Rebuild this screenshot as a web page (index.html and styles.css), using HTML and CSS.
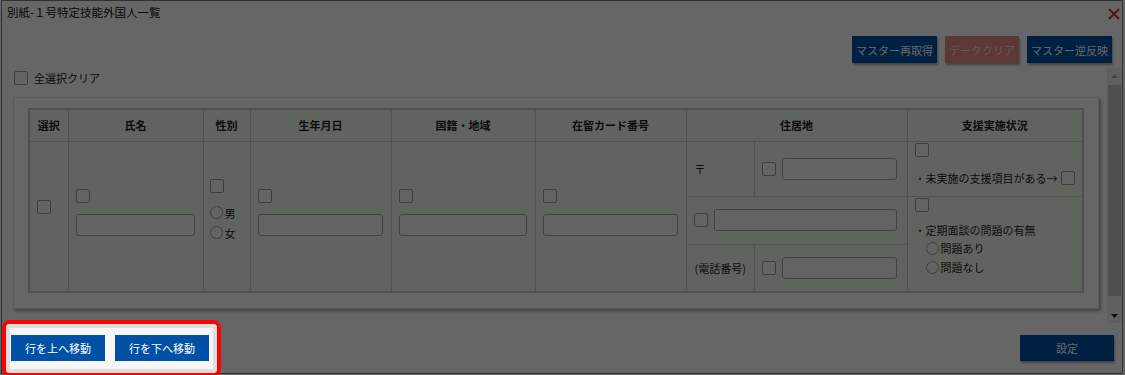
FILE: index.html
```html
<!DOCTYPE html>
<html lang="ja">
    <head>
        <meta charset="UTF-8">
        <meta name="viewport" content="width=device-width, initial-scale=1.0"/>
        <title>別紙-１号特定技能外国人一覧</title>
        <link rel="stylesheet" href="styles.css">
    </head>
    <body>
        <div class="dialog">
            <div class="dialog-title">
                <span class="title-text">別紙-１号特定技能外国人一覧</span>
                <button class="close" title="閉じる">
                    <svg width="14" height="14" viewBox="0 0 14 14"><path d="M2 2L12 12M12 2L2 12" stroke="#c83a3a" stroke-width="2" fill="none"/></svg>
                </button>
            </div>

            <div class="toolbar">
                <button class="btn btn-blue">マスター再取得</button>
                <button class="btn btn-red">データクリア</button>
                <button class="btn btn-blue">マスター逆反映</button>
            </div>

            <div class="scroll-area">
                <div class="scroll-content">
                    <label class="all-clear"><input type="checkbox" class="chk">全選択クリア</label>

                    <div class="panel">
                        <table class="grid">
                            <colgroup>
                                <col class="c-sel">
                                <col class="c-name">
                                <col class="c-sex">
                                <col class="c-birth">
                                <col class="c-nation">
                                <col class="c-card">
                                <col class="c-addr-label">
                                <col class="c-addr-input">
                                <col class="c-support">
                            </colgroup>
                            <thead>
                                <tr>
                                    <th>選択</th>
                                    <th>氏名</th>
                                    <th>性別</th>
                                    <th>生年月日</th>
                                    <th>国籍・地域</th>
                                    <th>在留カード番号</th>
                                    <th colspan="2">住居地</th>
                                    <th>支援実施状況</th>
                                </tr>
                            </thead>
                            <tbody>
                                <tr class="row-top">
                                    <td rowspan="3" class="cell-sel"><input type="checkbox" class="chk"></td>
                                    <td rowspan="3" class="cell-field"><input type="checkbox" class="chk"><input type="text" class="txt"></td>
                                    <td rowspan="3" class="cell-sex">
                                        <input type="checkbox" class="chk">
                                        <label class="radio"><input type="radio" name="sex" class="dot">男</label>
                                        <label class="radio"><input type="radio" name="sex" class="dot">女</label>
                                    </td>
                                    <td rowspan="3" class="cell-field"><input type="checkbox" class="chk"><input type="text" class="txt"></td>
                                    <td rowspan="3" class="cell-field"><input type="checkbox" class="chk"><input type="text" class="txt"></td>
                                    <td rowspan="3" class="cell-field"><input type="checkbox" class="chk"><input type="text" class="txt"></td>
                                    <td class="cell-label">〒</td>
                                    <td class="cell-input"><input type="checkbox" class="chk"><input type="text" class="txt"></td>
                                    <td class="cell-support">
                                        <input type="checkbox" class="chk">
                                        <div class="support-line first">・未実施の支援項目がある→<input type="checkbox" class="chk"></div>
                                    </td>
                                </tr>
                                <tr class="row-mid">
                                    <td colspan="2" class="cell-input wide"><input type="checkbox" class="chk"><input type="text" class="txt"></td>
                                    <td rowspan="2" class="cell-support">
                                        <input type="checkbox" class="chk">
                                        <div class="support-line">・定期面談の問題の有無</div>
                                        <label class="radio indent"><input type="radio" name="issue" class="dot">問題あり</label>
                                        <label class="radio indent"><input type="radio" name="issue" class="dot">問題なし</label>
                                    </td>
                                </tr>
                                <tr class="row-bottom">
                                    <td class="cell-label">(電話番号)</td>
                                    <td class="cell-input"><input type="checkbox" class="chk"><input type="text" class="txt"></td>
                                </tr>
                            </tbody>
                        </table>
                    </div>
                </div>

                <div class="scrollbar">
                    <span class="sb-arrow">
                        <svg width="7" height="4" viewBox="0 0 7 4"><polygon points="0,4 3.5,0 7,4" fill="#a8a8a8"/></svg>
                    </span>
                    <span class="sb-thumb"></span>
                    <span class="sb-arrow down">
                        <svg width="7" height="4" viewBox="0 0 7 4"><polygon points="0,0 7,0 3.5,4" fill="#2a2a2a"/></svg>
                    </span>
                </div>
            </div>

            <div class="dialog-footer">
                <div class="highlight">
                    <div class="move-group">
                        <button class="btn btn-move">行を上へ移動</button>
                        <button class="btn btn-move">行を下へ移動</button>
                    </div>
                </div>
                <button class="btn btn-blue btn-submit">設定</button>
            </div>
        </div>

        <div class="overlay"></div>
    </body>
</html>
```

FILE: styles.css
```css
*
{
    box-sizing: border-box;
}

html, body
{
    margin: 0;
}

body
{
    width: 1125px;
    height: 375px;
    overflow: hidden;
    background: #ffffff;
    color: #1e1e1e;
    font-family: "Noto Sans CJK JP", "Noto Sans", sans-serif;
    font-size: 11px;
}

button
{
    font-family: inherit;
}

/* ダイアログ本体 */
.dialog
{
    display: flex;
    flex-direction: column;
    width: 1122px;
    height: 374px;
    margin-left: 1px;
    border: 1px solid #7c7c7c;
    background: #ffffff;
}

.dialog-title
{
    display: flex;
    align-items: center;
    justify-content: space-between;
    height: 21px;
    padding: 0 1px 0 5px;
}

.title-text
{
    font-size: 11.5px;
    color: #111;
}

.close
{
    display: flex;
    padding: 0;
    border: 0;
    background: none;
    margin-top: 4px;
}

.toolbar
{
    display: flex;
    justify-content: flex-end;
    gap: 8px;
    margin-top: 14px;
    padding-right: 10px;
}

.btn
{
    height: 27px;
    padding: 0 4px;
    border: 0;
    color: #ffffff;
    font-size: 11px;
    box-shadow: 1px 2px 2px rgba(0, 0, 0, 0.35);
}

.btn-blue
{
    background: #0050a5;
}

.btn-red
{
    background: #e5908b;
    color: #f2dcda;
}

/* スクロール領域 */
.scroll-area
{
    display: flex;
    height: 255px;
    margin-top: 5px;
}

.scroll-content
{
    flex: 1;
    overflow: hidden;
    padding: 2px 8px 0 11px;
}

.scrollbar
{
    display: flex;
    flex-direction: column;
    width: 15px;
    background: #f0f0f0;
}

.sb-arrow
{
    display: flex;
    align-items: center;
    justify-content: center;
    height: 15px;
}

.sb-arrow.down
{
    margin-top: auto;
}

.sb-thumb
{
    height: 211px;
    margin: 2px 1px 0 1px;
    background: #c6c6c6;
}

.all-clear
{
    display: flex;
    align-items: center;
    gap: 6px;
    height: 15px;
    padding-left: 1px;
    color: #222;
}

.panel
{
    margin-top: 12px;
    padding: 10px 14px 15px 14px;
    border: 1px solid #e2e2e2;
    background: #ffffff;
    box-shadow: 2px 2px 3px rgba(0, 0, 0, 0.35);
}

.grid
{
    width: 1056px;
    border-collapse: collapse;
    table-layout: fixed;
    border: 2px solid #c9c9c9;
    background: #eefcec;
}

.grid th,
.grid td
{
    border: 1px solid #c8d2c6;
    padding: 0;
}

.grid th
{
    height: 32px;
    font-weight: bold;
    text-align: center;
}

.c-sel { width: 39px; }
.c-name { width: 135px; }
.c-sex { width: 47px; }
.c-birth { width: 141px; }
.c-nation { width: 144px; }
.c-card { width: 151px; }
.c-addr-label { width: 68px; }
.c-addr-input { width: 153px; }
.c-support { width: 176px; }

.row-top { height: 55px; }
.row-mid { height: 48px; }
.row-bottom { height: 48px; }

/* 入力部品 */
.chk
{
    -webkit-appearance: none;
    appearance: none;
    display: inline-block;
    width: 14px;
    height: 14px;
    margin: 0;
    border: 1px solid #9c9c9c;
    border-radius: 2px;
    background: #fafafa;
    vertical-align: middle;
}

.txt
{
    -webkit-appearance: none;
    appearance: none;
    height: 22px;
    margin: 0;
    padding: 2px 4px;
    border: 1px solid #a9a9a9;
    border-radius: 3px;
    background: #fbfbfb;
    font: inherit;
}

.dot
{
    -webkit-appearance: none;
    appearance: none;
    width: 13px;
    height: 13px;
    margin: 0 2px 0 0;
    border: 1px solid #9c9c9c;
    border-radius: 50%;
    background: #fafafa;
}

.radio
{
    display: flex;
    align-items: center;
    height: 20px;
}

.cell-sel
{
    vertical-align: middle;
    padding: 0 0 22px 7px !important;
}

.cell-field
{
    vertical-align: middle;
    padding: 0 8px 8px 7px !important;
}

.cell-field .chk
{
    display: block;
    margin-bottom: 11px;
}

.cell-field .txt
{
    display: block;
    width: 100%;
}

.cell-sex
{
    vertical-align: middle;
    padding: 0 0 11px 6px !important;
}

.cell-sex .chk
{
    display: block;
    margin-bottom: 10px;
}

.cell-label
{
    padding-left: 8px !important;
    vertical-align: middle;
}

.cell-input
{
    padding: 0 7px !important;
    vertical-align: middle;
}

.cell-input .chk
{
    margin-right: 6px;
}

.cell-input .txt
{
    width: 115px;
    vertical-align: middle;
}

.cell-input.wide .txt
{
    width: 183px;
}

.cell-support
{
    vertical-align: top;
    padding: 1px 6px 0 7px !important;
}

.cell-support > .chk
{
    display: block;
}

.support-line
{
    display: flex;
    align-items: center;
    gap: 3px;
    height: 17px;
    margin-top: 10px;
    white-space: nowrap;
}

.support-line.first
{
    margin-top: 13px;
}

.radio.indent
{
    height: 19px;
    margin-left: 11px;
}

/* フッター */
.dialog-footer
{
    display: flex;
    align-items: flex-start;
    justify-content: space-between;
    height: 48px;
    padding-right: 8px;
}

.highlight
{
    position: relative;
    z-index: 11;
    margin-top: -3px;
    border: 4px solid #ff0000;
    border-radius: 8px;
    background: #ffffff;
}

.move-group
{
    display: flex;
    gap: 10px;
    padding: 7px 4px 8px 1px;
    border: 4px solid #dedede;
    border-radius: 4px;
    background: #f7f7f7;
}

.btn-move
{
    width: 94px;
    height: 26px;
    background: #0050a5;
    box-shadow: none;
}

.btn-submit
{
    width: 94px;
    height: 26px;
    margin-top: 12px;
}

.overlay
{
    position: fixed;
    top: 0;
    right: 0;
    bottom: 0;
    left: 0;
    z-index: 10;
    background: rgba(0, 0, 0, 0.6);
}
```
